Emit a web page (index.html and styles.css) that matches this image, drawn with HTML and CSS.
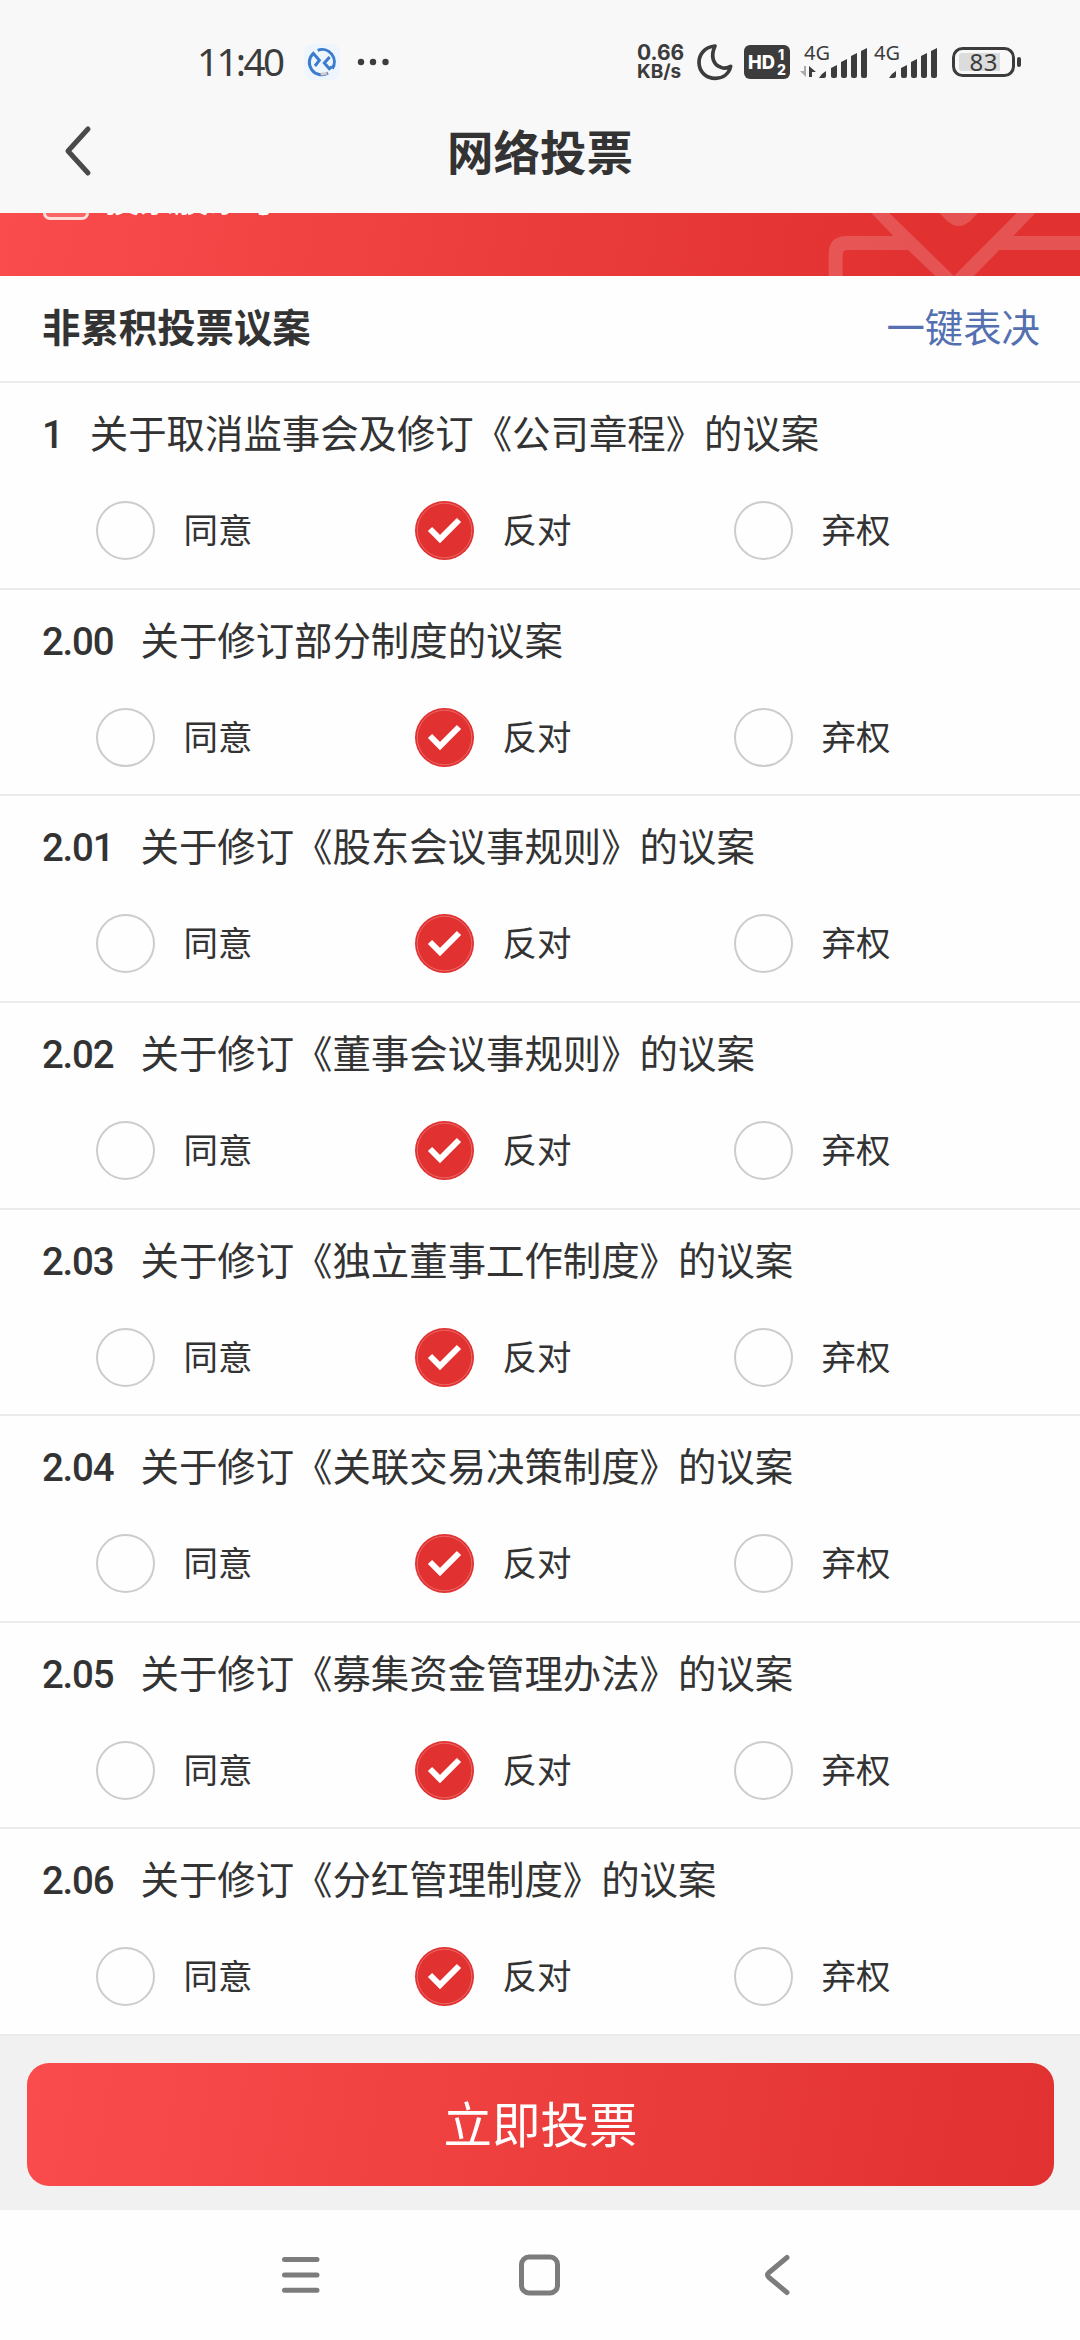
FILE: index.html
```
<!DOCTYPE html>
<html lang="zh-CN">
<head>
    <meta charset="UTF-8">
    <meta name="viewport" content="width=device-width, initial-scale=1.0">
    <title>网络投票</title>
    <link rel="stylesheet" href="styles.css">
</head>
<body>
    <div class="status-bar">
        <div class="status-left">
            <span class="time">11:40</span>
            <svg class="app-icon" width="36" height="36" viewBox="0 0 108 108">
                <rect width="108" height="108" rx="26" fill="#eef5fd"/>
                <g fill="none" stroke="#3b7ccf" stroke-width="9">
                    <path d="M41 19A37 37 0 0 1 85 74M72 87A37 37 0 0 1 28 28L46 49L33 66"/>
                    <path d="M77 39L61 57L76 74L84 68"/>
                </g>
                <path d="M50 90Q60 91 69 87" fill="none" stroke="#d9c8c0" stroke-width="8"/>
            </svg>
            <svg class="dots" width="32" height="8" viewBox="0 0 32 8" fill="#3c3c3c">
                <circle cx="4" cy="4" r="3.2"/><circle cx="16" cy="4" r="3.2"/><circle cx="28.5" cy="4" r="3.2"/>
            </svg>
        </div>
        <div class="status-right">
            <div class="speed"><b>0.66</b><span>KB/s</span></div>
            <svg class="moon" width="36" height="38" viewBox="0 0 108 114">
                <path d="M54 9C22 12 6 35 6 58C6 88 29 106 55 106C80 106 96 91 101 70C91 76 82 77 72 73C48 66 40 39 54 9Z" fill="none" stroke="#3c3c3c" stroke-width="11" stroke-linejoin="round"/>
            </svg>
            <svg class="hd" width="46" height="34" viewBox="0 0 46 34">
                <rect width="46" height="34" rx="6" fill="#3c3c3c"/>
                <text x="4" y="24" font-size="19" textLength="27" lengthAdjust="spacingAndGlyphs">HD</text>
                <text x="34" y="15" font-size="14">1</text>
                <text x="33" y="30" font-size="14">2</text>
            </svg>
            <svg class="signal" width="68" height="40" viewBox="0 -4 68 40" fill="#3c3c3c">
                <text x="4" y="16" font-size="20" textLength="26">4G</text>
                <path d="M6 22V33L0 27H4V22Z" fill="#aaa"/>
                <path d="M9 33V22L16 28H12V33Z"/>
                <path d="M19 34Q22 29 26 27V32Q26 34 24 34Z M31 24L37 21V32Q37 34 35 34H33Q31 34 31 32Z M41 18L47 15V32Q47 34 45 34H43Q41 34 41 32Z M51 12L57 9V32Q57 34 55 34H53Q51 34 51 32Z M61 7L67 4V32Q67 34 65 34H63Q61 34 61 32Z"/>
            </svg>
            <svg class="signal second" width="68" height="40" viewBox="0 -4 68 40" fill="#3c3c3c">
                <text x="4" y="16" font-size="20" textLength="26">4G</text>
                <path d="M19 34Q22 29 26 27V32Q26 34 24 34Z M31 24L37 21V32Q37 34 35 34H33Q31 34 31 32Z M41 18L47 15V32Q47 34 45 34H43Q41 34 41 32Z M51 12L57 9V32Q57 34 55 34H53Q51 34 51 32Z M61 7L67 4V32Q67 34 65 34H63Q61 34 61 32Z"/>
            </svg>
            <svg class="battery" width="70" height="30" viewBox="0 0 70 30">
                <rect x="1.5" y="1.5" width="60" height="27" rx="9" fill="none" stroke="#3c3c3c" stroke-width="3"/>
                <path d="M10 6H48V24H10Q7 24 7 21V9Q7 6 10 6Z" fill="#dcdcdc"/>
                <rect x="65" y="10" width="4" height="10" rx="2" fill="#3c3c3c"/>
                <text x="17.5" y="23.5" font-size="24" textLength="28" fill="#3c3c3c">83</text>
            </svg>
        </div>
    </div>

    <div class="header">
        <svg class="back" width="32" height="54" viewBox="0 0 32 54">
            <path d="M26 5L6 27L26 49" fill="none" stroke="#4a4a4a" stroke-width="5" stroke-linecap="round" stroke-linejoin="round"/>
        </svg>
        <h1>网络投票</h1>
    </div>

    <div class="banner">
        <div class="account">
            <span class="account-icon"></span>
            <span class="account-name">投票股东号</span>
        </div>
        <svg class="envelope" width="380" height="63" viewBox="0 0 1140 189" fill="#fff" fill-opacity="0.17">
            <path d="M514 0L580 69H440Q386 69 386 123V189H428V125Q428 111 442 111H624L706 189H822L898 111H1140V69H940L1006 0H950L762 189L568 0Z"/>
            <path d="M718 0L742 24Q776 54 810 24L834 0Z"/>
        </svg>
    </div>

    <div class="section-title">
        <h2>非累积投票议案</h2>
        <a href="#">一键表决</a>
    </div>

    <div class="list" id="voteList"></div>

    <div class="footer">
        <button class="submit">立即投票</button>
    </div>

    <div class="nav-bar">
        <svg width="42" height="44" viewBox="0 0 42 44"><path d="M4.500 6.500H37M4.500 22H37M4.500 37.300H37"/></svg>
        <svg width="42" height="44" viewBox="0 0 42 44"><rect x="2.500" y="4" width="36" height="36" rx="7.500"/></svg>
        <svg width="42" height="44" viewBox="0 0 42 44"><path d="M29 4.500L11 19.500Q8 22 11 24.500L29 39.500"/></svg>
    </div>

    <script>
        const proposals = [
            { no: "1", title: "关于取消监事会及修订《公司章程》的议案" },
            { no: "2.00", title: "关于修订部分制度的议案" },
            { no: "2.01", title: "关于修订《股东会议事规则》的议案" },
            { no: "2.02", title: "关于修订《董事会议事规则》的议案" },
            { no: "2.03", title: "关于修订《独立董事工作制度》的议案" },
            { no: "2.04", title: "关于修订《关联交易决策制度》的议案" },
            { no: "2.05", title: "关于修订《募集资金管理办法》的议案" },
            { no: "2.06", title: "关于修订《分红管理制度》的议案" }
        ];
        const options = ["同意", "反对", "弃权"];
        const votes = proposals.map(() => 1);

        function loadList() {
            const list = document.getElementById("voteList");
            list.innerHTML = "";
            proposals.forEach((item, index) => {
                const row = document.createElement("div");
                row.classList.add("item");
                row.innerHTML = `<div class="item-title"><span class="no">${item.no}</span><span>${item.title}</span></div>
                    <div class="options">${options.map((name, i) => `
                        <div class="option" onclick="vote(${index}, ${i})">
                            <span class="radio ${votes[index] === i ? "checked" : ""}">
                                <svg width="59" height="59" viewBox="0 0 59 59"><circle cx="29.5" cy="29.5" r="27.3"/><path d="M15 28L25 38L44 19"/></svg>
                            </span>
                            <span class="label">${name}</span>
                        </div>`).join("")}
                    </div>`;
                list.appendChild(row);
            });
        }

        function vote(index, i) {
            votes[index] = i;
            loadList();
        }

        loadList();
    </script>
</body>
</html>
```
FILE: styles.css
```
* {
    box-sizing: border-box;
}
body {
    margin: 0;
    width: 1080px;
    height: 2340px;
    overflow: hidden;
    display: flex;
    flex-direction: column;
    background: #fefefe;
    color: #333;
    font-family: Roboto, "Noto Sans CJK SC", sans-serif;
}
svg {
    display: block;
    flex-shrink: 0;
}
.status-bar {
    height: 100px;
    padding: 24px 58px 0 197px;
    display: flex;
    justify-content: space-between;
    align-items: center;
    background: #f8f8f8;
    flex-shrink: 0;
}
.status-left,
.status-right {
    display: flex;
    align-items: center;
}
.time {
    width: 107px;
    padding-bottom: 2px;
    font-family: "Noto Sans", sans-serif;
    font-size: 38.5px;
    line-height: 40px;
    letter-spacing: -2.6px;
    color: #3c3c3c;
}
.dots {
    margin-left: 17px;
}
.speed {
    width: 59px;
    display: flex;
    flex-direction: column;
    font-family: Inter, sans-serif;
    font-weight: 700;
    font-size: 21px;
    line-height: 19px;
    color: #3c3c3c;
}
.speed b {
    font-weight: 700;
}
.speed span {
    font-size: 19px;
}
.moon {
    margin-left: 1px;
}
.hd {
    margin-left: 11px;
}
.hd text {
    font-family: Inter, sans-serif;
    font-weight: 800;
    fill: #fff;
}
.signal {
    margin: -4px 0 0 10px;
}
.signal text,
.battery text {
    font-family: "Noto Sans", sans-serif;
}
.signal.second {
    margin-left: 2px;
}
.battery {
    margin-left: 14px;
}
.header {
    height: 113px;
    padding: 0 62px 11px;
    display: grid;
    grid-template-columns: 1fr auto 1fr;
    align-items: center;
    background: #f8f8f8;
    flex-shrink: 0;
}
.header h1 {
    margin: 0;
    padding-top: 5px;
    font-size: 46.5px;
    line-height: 60px;
    font-weight: 700;
}
.banner {
    height: 63px;
    display: flex;
    justify-content: space-between;
    align-items: flex-start;
    overflow: hidden;
    background: linear-gradient(100deg, #fa4c4c, #e13131 85%);
    flex-shrink: 0;
}
/* the account row is scrolled under the header */
.account {
    height: 40px;
    margin-top: -33px;
    padding-left: 43px;
    display: flex;
    align-items: flex-end;
    color: #fff;
    font-size: 34.5px;
    line-height: 40px;
}
.account-icon {
    width: 46px;
    height: 34px;
    margin-right: 16px;
    border: 3px solid #ffdcdc;
    border-radius: 7px;
    background: rgba(255, 255, 255, 0.15);
}
.section-title {
    height: 107px;
    padding: 0 40px 7px 42px;
    display: flex;
    justify-content: space-between;
    align-items: center;
    border-bottom: 2px solid #ebebeb;
    flex-shrink: 0;
}
.section-title h2 {
    margin: 0;
    font-size: 38.4px;
    font-weight: 700;
}
.section-title a {
    font-size: 38.4px;
    color: #5470b0;
    text-decoration: none;
}
.item {
    height: 206.63px;
    padding-top: 29px;
    border-bottom: 2px solid #ebebeb;
}
.item-title {
    height: 46px;
    padding-left: 42px;
    display: flex;
    align-items: center;
    font-size: 38.4px;
    line-height: 46px;
}
.no {
    margin-right: 27.2px;
    font-weight: 500;
    letter-spacing: -1.2px;
}
.options {
    margin-top: 43px;
    padding-left: 96px;
    display: grid;
    grid-template-columns: repeat(3, 319px);
}
.option {
    height: 59px;
    display: flex;
    align-items: center;
    font-size: 34.5px;
    cursor: pointer;
}
.label {
    padding-bottom: 5px;
}
.radio {
    width: 59px;
    height: 59px;
    margin-right: 28.5px;
    border: 2px solid #ccc;
    border-radius: 50%;
}
.radio svg {
    display: none;
}
.radio.checked {
    border: none;
    background: #e13131;
}
.radio.checked svg {
    display: block;
    fill: none;
}
.radio circle {
    stroke: #ec7676;
    stroke-width: 0.8;
}
.radio path {
    stroke: #fff;
    stroke-width: 6;
}
.footer {
    height: 174px;
    padding: 27px 26px 24px 27px;
    display: flex;
    background: #f1f1f1;
    flex-shrink: 0;
}
.submit {
    flex: 1;
    padding: 0 0 6px;
    border: none;
    border-radius: 22px;
    background: linear-gradient(100deg, #fa4c4c, #e13131);
    color: #fff;
    font-family: inherit;
    font-size: 48.5px;
}
.nav-bar {
    height: 130px;
    padding: 0 280px;
    display: flex;
    justify-content: space-between;
    align-items: center;
    background: #fefefe;
    flex-shrink: 0;
}
.nav-bar svg {
    fill: none;
    stroke: #7c7c7c;
    stroke-width: 5;
    stroke-linecap: round;
}
```
